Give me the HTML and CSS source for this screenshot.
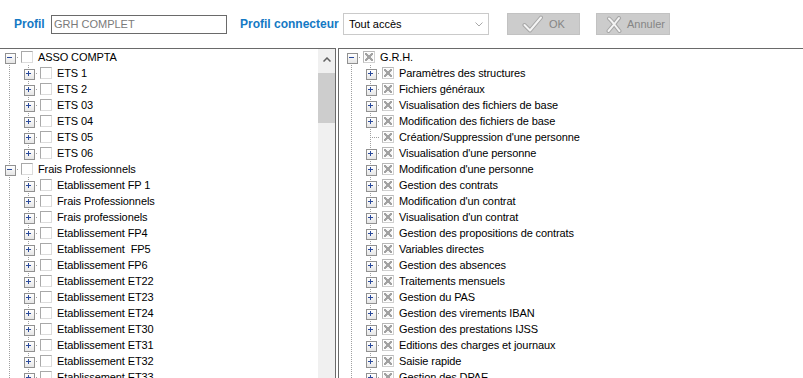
FILE: index.html
```html
<!DOCTYPE html>
<html lang="fr">
<head>
<meta charset="utf-8">
<title>Profil</title>
<link rel="stylesheet" href="styles.css">
</head>
<body>
<div class="toolbar">
  <span class="lbl lbl-profil">Profil</span>
  <div class="field">GRH COMPLET</div>
  <span class="lbl lbl-conn">Profil connecteur</span>
  <div class="select"><span>Tout accès</span><svg class="chev" width="8" height="5" viewBox="0 0 8 5"><polyline points="0.5,0.5 4,4 7.5,0.5" fill="none" stroke="#a8a8a8" stroke-width="1"/></svg></div>
  <div class="btn btn-ok"><svg width="21" height="18" viewBox="0 0 21 18"><path d="M2.5 10 L8 15.5 L19 2.5" fill="none" stroke="#a6a6a6" stroke-width="4" stroke-linejoin="round" stroke-linecap="round"/><path d="M2.5 10 L8 15.5 L19 2.5" fill="none" stroke="#f4f4f4" stroke-width="2" stroke-linejoin="round" stroke-linecap="round"/></svg><span>OK</span></div>
  <div class="btn btn-cancel"><svg width="16" height="17" viewBox="0 0 16 17"><path d="M3 2.5 C7 6, 10 11, 13.5 15 M13 2 C10 6, 6 11, 2.5 15" fill="none" stroke="#a6a6a6" stroke-width="4" stroke-linecap="round"/><path d="M3 2.5 C7 6, 10 11, 13.5 15 M13 2 C10 6, 6 11, 2.5 15" fill="none" stroke="#f4f4f4" stroke-width="2" stroke-linecap="round"/></svg><span>Annuler</span></div>
</div>
<div class="panes">
  <div class="pane pane-left">
    <div class="tree">
      <div class="row"><i class="n first minus"></i><i class="cb"></i><span class="t">ASSO COMPTA</span></div>
      <div class="row"><i class="g"></i><i class="n plus"></i><i class="cb"></i><span class="t">ETS 1</span></div>
      <div class="row"><i class="g"></i><i class="n plus"></i><i class="cb"></i><span class="t">ETS 2</span></div>
      <div class="row"><i class="g"></i><i class="n plus"></i><i class="cb"></i><span class="t">ETS 03</span></div>
      <div class="row"><i class="g"></i><i class="n plus"></i><i class="cb"></i><span class="t">ETS 04</span></div>
      <div class="row"><i class="g"></i><i class="n plus"></i><i class="cb"></i><span class="t">ETS 05</span></div>
      <div class="row"><i class="g"></i><i class="n last plus"></i><i class="cb"></i><span class="t">ETS 06</span></div>
      <div class="row"><i class="n minus"></i><i class="cb"></i><span class="t">Frais Professionnels</span></div>
      <div class="row"><i class="g"></i><i class="n plus"></i><i class="cb"></i><span class="t">Etablissement FP 1</span></div>
      <div class="row"><i class="g"></i><i class="n plus"></i><i class="cb"></i><span class="t">Frais Professionnels</span></div>
      <div class="row"><i class="g"></i><i class="n plus"></i><i class="cb"></i><span class="t">Frais professionels</span></div>
      <div class="row"><i class="g"></i><i class="n plus"></i><i class="cb"></i><span class="t">Etablissement FP4</span></div>
      <div class="row"><i class="g"></i><i class="n plus"></i><i class="cb"></i><span class="t">Etablissement  FP5</span></div>
      <div class="row"><i class="g"></i><i class="n plus"></i><i class="cb"></i><span class="t">Etablissement FP6</span></div>
      <div class="row"><i class="g"></i><i class="n plus"></i><i class="cb"></i><span class="t">Etablissement ET22</span></div>
      <div class="row"><i class="g"></i><i class="n plus"></i><i class="cb"></i><span class="t">Etablissement ET23</span></div>
      <div class="row"><i class="g"></i><i class="n plus"></i><i class="cb"></i><span class="t">Etablissement ET24</span></div>
      <div class="row"><i class="g"></i><i class="n plus"></i><i class="cb"></i><span class="t">Etablissement ET30</span></div>
      <div class="row"><i class="g"></i><i class="n plus"></i><i class="cb"></i><span class="t">Etablissement ET31</span></div>
      <div class="row"><i class="g"></i><i class="n plus"></i><i class="cb"></i><span class="t">Etablissement ET32</span></div>
      <div class="row"><i class="g"></i><i class="n plus"></i><i class="cb"></i><span class="t">Etablissement ET33</span></div>
    </div>
    <div class="vscroll">
      <div class="up"><svg width="8" height="5" viewBox="0 0 8 5"><polyline points="0.5,4.5 4,1 7.5,4.5" fill="none" stroke="#606060" stroke-width="1.5"/></svg></div>
      <div class="thumb"></div>
    </div>
  </div>
  <div class="pane pane-right">
    <div class="tree">
      <div class="row"><i class="n first minus"></i><i class="cb x"></i><span class="t">G.R.H.</span></div>
      <div class="row"><i class="g"></i><i class="n plus"></i><i class="cb x"></i><span class="t">Paramètres des structures</span></div>
      <div class="row"><i class="g"></i><i class="n plus"></i><i class="cb x"></i><span class="t">Fichiers généraux</span></div>
      <div class="row"><i class="g"></i><i class="n plus"></i><i class="cb x"></i><span class="t">Visualisation des fichiers de base</span></div>
      <div class="row"><i class="g"></i><i class="n plus"></i><i class="cb x"></i><span class="t">Modification des fichiers de base</span></div>
      <div class="row"><i class="g"></i><i class="n"></i><i class="cb x"></i><span class="t">Création/Suppression d'une personne</span></div>
      <div class="row"><i class="g"></i><i class="n plus"></i><i class="cb x"></i><span class="t">Visualisation d'une personne</span></div>
      <div class="row"><i class="g"></i><i class="n plus"></i><i class="cb x"></i><span class="t">Modification d'une personne</span></div>
      <div class="row"><i class="g"></i><i class="n plus"></i><i class="cb x"></i><span class="t">Gestion des contrats</span></div>
      <div class="row"><i class="g"></i><i class="n plus"></i><i class="cb x"></i><span class="t">Modification d'un contrat</span></div>
      <div class="row"><i class="g"></i><i class="n plus"></i><i class="cb x"></i><span class="t">Visualisation d'un contrat</span></div>
      <div class="row"><i class="g"></i><i class="n plus"></i><i class="cb x"></i><span class="t">Gestion des propositions de contrats</span></div>
      <div class="row"><i class="g"></i><i class="n plus"></i><i class="cb x"></i><span class="t">Variables directes</span></div>
      <div class="row"><i class="g"></i><i class="n plus"></i><i class="cb x"></i><span class="t">Gestion des absences</span></div>
      <div class="row"><i class="g"></i><i class="n plus"></i><i class="cb x"></i><span class="t">Traitements mensuels</span></div>
      <div class="row"><i class="g"></i><i class="n plus"></i><i class="cb x"></i><span class="t">Gestion du PAS</span></div>
      <div class="row"><i class="g"></i><i class="n plus"></i><i class="cb x"></i><span class="t">Gestion des virements IBAN</span></div>
      <div class="row"><i class="g"></i><i class="n plus"></i><i class="cb x"></i><span class="t">Gestion des prestations IJSS</span></div>
      <div class="row"><i class="g"></i><i class="n plus"></i><i class="cb x"></i><span class="t">Editions des charges et journaux</span></div>
      <div class="row"><i class="g"></i><i class="n plus"></i><i class="cb x"></i><span class="t">Saisie rapide</span></div>
      <div class="row"><i class="g"></i><i class="n plus"></i><i class="cb x"></i><span class="t">Gestion des DPAE</span></div>
    </div>
  </div>
</div>
</body>
</html>
```

FILE: styles.css
```css
* { box-sizing: border-box; }
html, body { margin: 0; padding: 0; background: #fff; }
body {
  width: 803px;
  height: 378px;
  overflow: hidden;
  font-family: "Liberation Sans", Arial, sans-serif;
  font-size: 11px;
  color: #000;
}

/* ---------- toolbar ---------- */
.toolbar {
  display: flex;
  align-items: flex-start;
  height: 48px;
  padding-left: 14px;
}
.lbl {
  font-size: 12px;
  font-weight: bold;
  color: #1479c4;
  line-height: 48px;
  white-space: nowrap;
}
.lbl-profil { width: 37px; }
.lbl-conn { width: 103px; margin-left: 13px; }
.field {
  margin-top: 15px;
  width: 176px;
  height: 19px;
  border: 1px solid #6a6a6a;
  padding-left: 2px;
  line-height: 17px;
  color: #7a7a7a;
}
.select {
  margin-top: 13px;
  width: 146px;
  height: 22px;
  border: 1px solid #cacaca;
  display: flex;
  align-items: center;
  padding-left: 5px;
}
.chev { margin-left: auto; margin-right: 5px; }
.btn {
  margin-top: 13px;
  height: 22px;
  background: #cccccc;
  border: 1px solid #c2c2c2;
  display: flex;
  align-items: center;
  color: #858585;
}
.btn svg { flex: none; }
.btn-ok { margin-left: 18px; width: 73px; padding-left: 14px; gap: 6px; }
.btn-cancel { margin-left: 16px; width: 74px; padding-left: 9px; gap: 5px; }

/* ---------- panes ---------- */
.panes {
  display: flex;
  height: 330px;
}
.pane {
  border-top: 1px solid #6a6a6a;
  overflow: hidden;
}
.pane-left {
  width: 336px;
  border-right: 1px solid #6a6a6a;
  display: flex;
}
.pane-left .tree { flex: 1; }
.pane-right {
  flex: 1;
  margin-left: 2px;
  border-left: 1px solid #6a6a6a;
  padding-left: 3px;
}
.tree { overflow: hidden; }

.vscroll {
  width: 17px;
  flex: none;
  background: #f0f0f0;
}
.vscroll .up {
  height: 17px;
  display: flex;
  align-items: center;
  justify-content: center;
  padding-top: 3px;
}
.vscroll .thumb {
  margin-top: 7px;
  height: 50px;
  background: #cdcdcd;
}

/* ---------- tree rows ---------- */
.row {
  display: flex;
  align-items: center;
  height: 16px;
  white-space: pre;
  line-height: 16px;
}
.g, .n {
  flex: none;
  width: 19px;
  height: 16px;
  position: relative;
}
.g {
  background: repeating-linear-gradient(to bottom, #a0a0a0 0 1px, transparent 1px 2px) 9px 0 / 1px 16px no-repeat;
}
.n {
  background:
    repeating-linear-gradient(to bottom, #a0a0a0 0 1px, transparent 1px 2px) 9px 0 / 1px 16px no-repeat,
    repeating-linear-gradient(to right, #a0a0a0 0 1px, transparent 1px 2px) 9px 8px / 10px 1px no-repeat;
}
.n.first {
  background:
    repeating-linear-gradient(to bottom, #a0a0a0 0 1px, transparent 1px 2px) 9px 8px / 1px 8px no-repeat,
    repeating-linear-gradient(to right, #a0a0a0 0 1px, transparent 1px 2px) 9px 8px / 10px 1px no-repeat;
}
.n.last {
  background:
    repeating-linear-gradient(to bottom, #a0a0a0 0 1px, transparent 1px 2px) 9px 0 / 1px 8px no-repeat,
    repeating-linear-gradient(to right, #a0a0a0 0 1px, transparent 1px 2px) 9px 8px / 10px 1px no-repeat;
}
.n.plus::before, .n.minus::before {
  content: "";
  position: absolute;
  left: 5px;
  top: 4px;
  width: 9px;
  height: 9px;
  border: 1px solid #919191;
  background: linear-gradient(#ffffff, #e6e6e6);
}
.n.plus::after, .n.minus::after {
  content: "";
  position: absolute;
  left: 7px;
  top: 6px;
  width: 5px;
  height: 5px;
}
.n.minus::after {
  background: linear-gradient(#2a4a9c, #2a4a9c) center / 5px 1px no-repeat;
}
.n.plus::after {
  background:
    linear-gradient(#2a4a9c, #2a4a9c) center / 5px 1px no-repeat,
    linear-gradient(#2a4a9c, #2a4a9c) center / 1px 5px no-repeat;
}

.cb {
  flex: none;
  width: 12px;
  height: 12px;
  margin-left: 2px;
  margin-right: 5px;
  border: 1px solid #dcdcdc;
  border-top-color: #a9a9a9;
  border-left-color: #a9a9a9;
  background: #fff;
}
.cb.x {
  border-color: #d0d0d0;
  border-top-color: #b8b8b8;
  border-left-color: #b8b8b8;
  padding: 1px;
  background-color: #f5f5f5;
  background-image:
    linear-gradient(45deg, transparent calc(50% - 1px), #a2a2a2 calc(50% - 1px), #a2a2a2 calc(50% + 1px), transparent calc(50% + 1px)),
    linear-gradient(-45deg, transparent calc(50% - 1px), #a2a2a2 calc(50% - 1px), #a2a2a2 calc(50% + 1px), transparent calc(50% + 1px));
  background-origin: content-box;
  background-clip: content-box;
  background-repeat: no-repeat;
}
.t { color: #000; letter-spacing: -0.1px; }
```
